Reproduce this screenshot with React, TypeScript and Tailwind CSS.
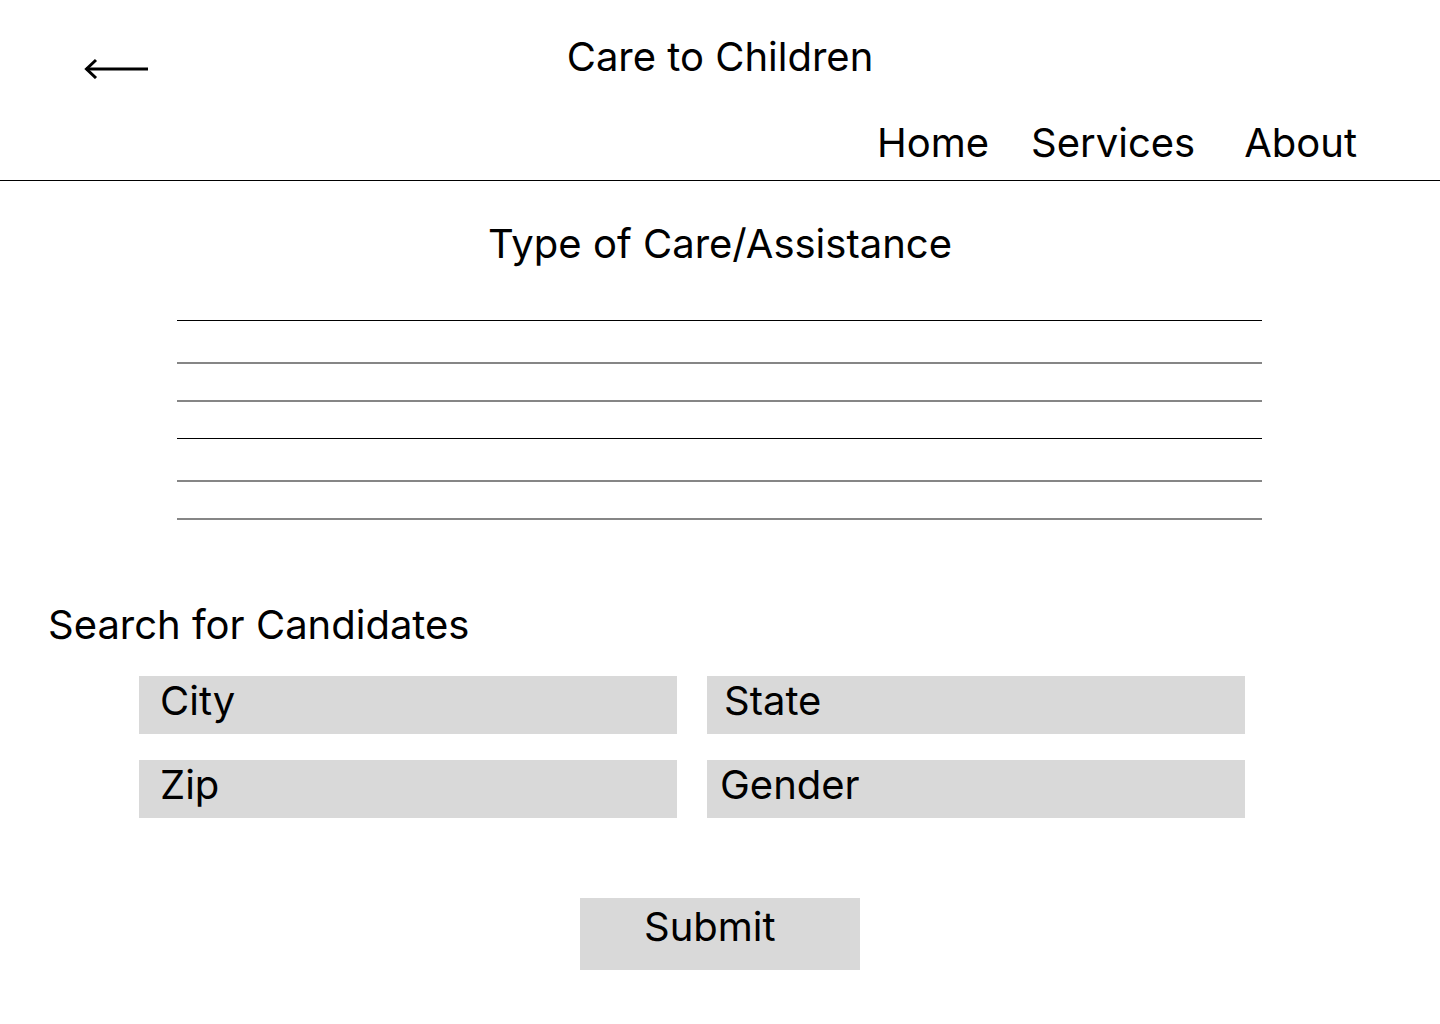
export default function App() {
  const lines = [
    'mt-[52px] h-px bg-black',
    'mt-[41px] h-[2px] bg-[#868686]',
    'mt-[36px] h-[2px] bg-[#868686]',
    'mt-[36px] h-px bg-black',
    'mt-[41px] h-[2px] bg-[#868686]',
    'mt-[36px] h-[2px] bg-[#868686]',
  ]

  return (
    <div className="min-h-screen bg-white text-black font-['Inter',sans-serif] text-[40px] leading-[48px]">
      <header className="border-b border-black h-[181px]">
        <div className="grid grid-cols-[1fr_auto_1fr] pt-[33px]">
          <div className="pl-[84px] pt-[24px]">
            <svg width="66" height="22" viewBox="0 0 66 22" fill="none" stroke="black" strokeWidth="3">
              <path d="M2 12 H64" />
              <path d="M12 3 L2.5 12 L12 21" strokeLinejoin="miter" />
            </svg>
          </div>
          <h1 className="font-normal">Care to Children</h1>
          <div />
        </div>
        <nav className="flex justify-end pr-[83px] mt-[38px]">
          <a className="mr-[42px]">Home</a>
          <a className="mr-[49px]">Services</a>
          <a>About</a>
        </nav>
      </header>

      <main>
        <h2 className="text-center mt-[39px]">Type of Care/Assistance</h2>
        <div className="ml-[177px] w-[1085px]">
          {lines.map((c, i) => (
            <div key={i} className={c} />
          ))}
        </div>

        <h2 className="ml-[48px] mt-[81px]">Search for Candidates</h2>
        <div className="ml-[139px] mt-[27px] grid grid-cols-[538px_538px] gap-x-[30px] gap-y-[26px]">
          <div className="h-[58px] bg-[#d9d9d9] pl-[21px] pt-px">City</div>
          <div className="h-[58px] bg-[#d9d9d9] pl-[17px] pt-px">State</div>
          <div className="h-[58px] bg-[#d9d9d9] pl-[21px] pt-px">Zip</div>
          <div className="h-[58px] bg-[#d9d9d9] pl-[13px] pt-px">Gender</div>
        </div>

        <div className="ml-[580px] mt-[80px] w-[280px] h-[72px] bg-[#d9d9d9] pl-[64px] pt-[5px]">Submit</div>
      </main>
    </div>
  )
}
